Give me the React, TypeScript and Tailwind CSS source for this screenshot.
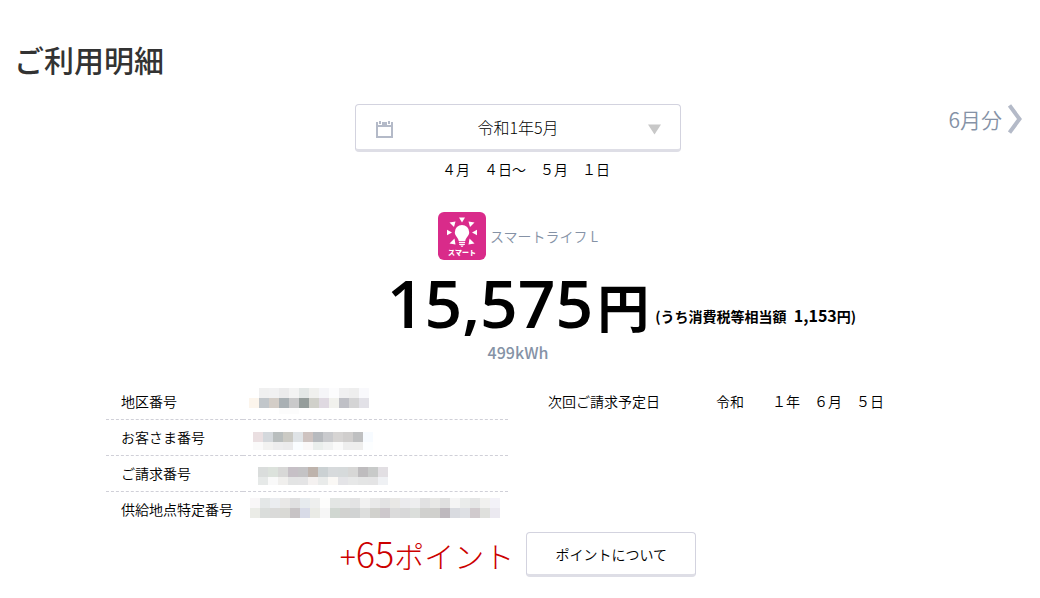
import React from 'react';

type Block = { x: number; y: number; h: number; colors: string[] };

const accountRows: { label: string; blocks: Block[] }[] = [
  {
    label: '地区番号',
    blocks: [
      { x: 16, y: 5, h: 10, colors: ['#f0f0f0', '#f1f1f2', '#ebebec', '#f3f3f3', '#e3e7e6', '#f0f0ee', '#f5f5f8', '#fcfcfd', '#f0f0f1', '#eeeeee', '#f9f9fc'] },
      { x: 6, y: 15, h: 10, colors: ['#fcf5ec', '#c1c6ca', '#d3cdc7', '#a9b0b4', '#c9c9ca', '#959d9b', '#d0d0ca', '#dfd9e1', '#f1f1ed', '#bfc0c6', '#d4d4d5', '#e2e1e7'] },
      { x: 36, y: 25, h: 6, colors: ['#fcfcfc', '#fcfcfc'] },
    ],
  },
  {
    label: 'お客さま番号',
    blocks: [
      { x: 10, y: 12, h: 10, colors: ['#eadfe1', '#d4d8dc', '#b9bebe', '#cbcac4', '#dfe3e6', '#cec3c0', '#b7babe', '#c9cacd', '#d6d4d3', '#d0cecd', '#bfc0c1', '#f7fbff'] },
      { x: 10, y: 22, h: 8, colors: ['#fafafa', '#f2f2f1', '#ededee', '#ebebec', '#fafdff', '#faf8f8', '#eaeeec', '#f1f2f2', '#fafafa', '#eeeeee', '#eeeeed', '#fcfeff'] },
    ],
  },
  {
    label: 'ご請求番号',
    blocks: [
      { x: 15, y: 11, h: 10, colors: ['#dadddc', '#dce2dc', '#d8d8d7', '#c6c0c6', '#c4c3c5', '#beb3ac', '#cbd1d3', '#d7dadc', '#d6dadb', '#d7d7d6', '#bebcbe', '#c8cac9', '#e2dfe3'] },
      { x: 15, y: 21, h: 8, colors: ['#e6e9e8', '#f9f9f9', '#f0efed', '#e3e4e4', '#e4e4e5', '#f4f1f0', '#e9ebea', '#faf8f5', '#e4e4e7', '#e7e8e8', '#e4e5e5', '#e4e4e5', '#eff1f4'] },
    ],
  },
  {
    label: '供給地点特定番号',
    blocks: [
      { x: 7, y: 6, h: 10, colors: ['#f9f7f8', '#e4e7e7', '#ebedf0', '#e9e8e7', '#e0e0e1', '#e7ebee', '#eeefee', '#fdfdfc', '#e3e6e4', '#e6e7e7', '#e3e3e4', '#f1f1f1', '#e9e9e9', '#e3e3e4', '#e9e8e6', '#ebebee', '#eeeeef', '#e1e1e2', '#e8e8e6', '#e0e0e0', '#f5f5f5', '#eaeceb', '#e5e6e6', '#f1f1ef', '#f3f2f8'] },
      { x: 7, y: 16, h: 10, colors: ['#ebece7', '#dadddb', '#dadad9', '#d9d9d5', '#c7c3c5', '#d8dbe7', '#eaebe6', '#f6f6f6', '#d0d7d1', '#d2d2d0', '#d1d3d3', '#dddedd', '#d1d1cd', '#cdc8cc', '#dbdbdb', '#d8d8d9', '#dbdedb', '#d0d0ce', '#d0d0cd', '#beb9be', '#d9dbe0', '#dee0e4', '#d0cacd', '#dfe0dd', '#ebe9f0'] },
    ],
  },
];

function Mosaic({ blocks }: { blocks: Block[] }) {
  return (
    <svg width="262" height="35" shapeRendering="crispEdges" className="block" aria-hidden="true">
      {blocks.map((block) =>
        block.colors.map((color, i) => (
          <rect key={`${block.y}-${i}`} x={block.x + i * 10} y={block.y} width="10" height={block.h} fill={color} />
        ))
      )}
    </svg>
  );
}

function SmartLogo() {
  return (
    <svg width="48" height="48" viewBox="0 0 48 48" role="img" aria-label="スマート">
      <rect width="48" height="48" rx="6" fill="#d92b8a" />
      <g fill="#fff">
        <path d="M21 5.500h6l-3 5z" />
        <path d="M11.500 10.500l6-1-1.500 5.500z" />
        <path d="M36.500 10.500l-6-1 1.500 5.500z" />
        <path d="M9 17.800v5.400l5-2.700z" />
        <path d="M39 17.800v5.400l-5-2.700z" />
        <path d="M11.500 31.500l6 1-1-6z" />
        <path d="M36.500 31.500l-6 1 1-6z" />
        <path d="M24 13a7.200 7.200 0 0 0-7.200 7.200c0 4 3.600 5.200 3.900 8.800h6.600c.3-3.600 3.900-4.800 3.900-8.800a7.200 7.200 0 0 0-7.200-7.200z" />
        <path d="M20.900 29.700h6.200v1.300h-6.200zM21.200 31.700h5.600v1.200h-5.600zM22.300 33.500h3.400l-.9 1.200h-1.600z" />
      </g>
      <text x="24" y="43" textAnchor="middle" fontSize="7" fontWeight="900" fill="#fff">スマート</text>
    </svg>
  );
}

export default function App() {
  return (
    <main className="bg-white pl-3.5 pr-[18px] pt-[39px] pb-5 text-sm font-[350] text-black font-['Noto_Sans_CJK_JP',sans-serif]">
      <h1 className="text-[30px] leading-10 font-medium text-[#333]">ご利用明細</h1>

      {/* Month picker */}
      <div className="mt-[25px] grid grid-cols-[1fr_auto_1fr] items-start">
        <div className="relative col-start-2">
          <select
            aria-label="ご利用月"
            className="block h-12 w-[326px] appearance-none rounded border border-b-[3px] border-[#d3d3df] border-b-[#dedee6] bg-white px-12 text-center text-base font-light text-black"
          >
            <option>令和1年5月</option>
          </select>
          <svg className="pointer-events-none absolute left-[21px] top-4" width="17" height="18" viewBox="0 0 17 18" fill="#b4bac8">
            <path fillRule="evenodd" d="M0 2h2v3h4V2h5v3h4V2h2v16H0zM2 7v9h13V7z" />
            <path d="M3 1h2v3H3zM12 1h2v3h-2z" />
          </svg>
          <svg className="pointer-events-none absolute right-5 top-5" width="13" height="11" viewBox="0 0 13 11" fill="#c8c8c8">
            <path d="M0 0.5h13L6.500 10.500z" />
          </svg>
        </div>
        <a href="#next" className="flex items-center justify-self-end gap-1.5 text-[21px] leading-[30px] text-[#8592a6]">
          6月分
          <svg width="14" height="30" viewBox="0 0 14 30" fill="none" stroke="#b4bac8" strokeWidth="4">
            <path d="M1.500 1.500L11.500 15L1.500 28.500" />
          </svg>
        </a>
      </div>
      <p className="mt-[7px] ml-4 text-center leading-5">４月　４日～　５月　１日</p>

      {/* Plan and amount */}
      <div className="mt-[33px] flex items-center justify-center gap-1 text-[#8592a6]">
        <SmartLogo />
        <span>スマートライフ L</span>
      </div>
      <div className="mt-2 grid grid-cols-[1fr_auto_1fr] items-end font-bold">
        <p className="col-start-2 text-[66px] leading-[68px] font-semibold whitespace-nowrap font-['Open_Sans','Noto_Sans_CJK_JP',sans-serif]">
          15,575<span className="ml-1 text-[52px] leading-none">円</span>
        </p>
        <p className="ml-1.5 pb-2.5 leading-5 whitespace-nowrap">
          (うち消費税等相当額 <span className="ml-1 text-base leading-none">1,153</span>円)
        </p>
      </div>
      <p className="mt-1 text-center text-base leading-6 font-medium text-[#8592a6]">499kWh</p>

      {/* Account details */}
      <div className="mx-auto mt-[19px] grid max-w-[824px] grid-cols-2 items-start gap-5">
        <table className="w-full border-collapse text-left">
          <tbody>
            {accountRows.map((row) => (
              <tr key={row.label} className="border-b border-dashed border-[#d0d0d8] last:border-b-0">
                <th scope="row" className="h-9 w-[137px] p-0 pl-[15px] font-[350] whitespace-nowrap">{row.label}</th>
                <td className="p-0"><Mosaic blocks={row.blocks} /></td>
              </tr>
            ))}
          </tbody>
        </table>
        <table className="w-full text-left">
          <tbody>
            <tr>
              <th scope="row" className="h-9 w-[188px] p-0 pl-5 font-[350] whitespace-nowrap">次回ご請求予定日</th>
              <td className="p-0 whitespace-nowrap">令和　　１年　６月　５日</td>
            </tr>
          </tbody>
        </table>
      </div>

      {/* Points */}
      <div className="mt-[5px] flex items-center justify-center gap-3">
        <p className="text-[30px] leading-10 font-light text-[#cc0000]">
          +<span className="text-4xl leading-none">65</span>ポイント
        </p>
        <button type="button" className="h-[45px] w-[170px] rounded border border-b-[3px] border-[#d3d3df] border-b-[#dedee6] bg-white text-black">
          ポイントについて
        </button>
      </div>
    </main>
  );
}
